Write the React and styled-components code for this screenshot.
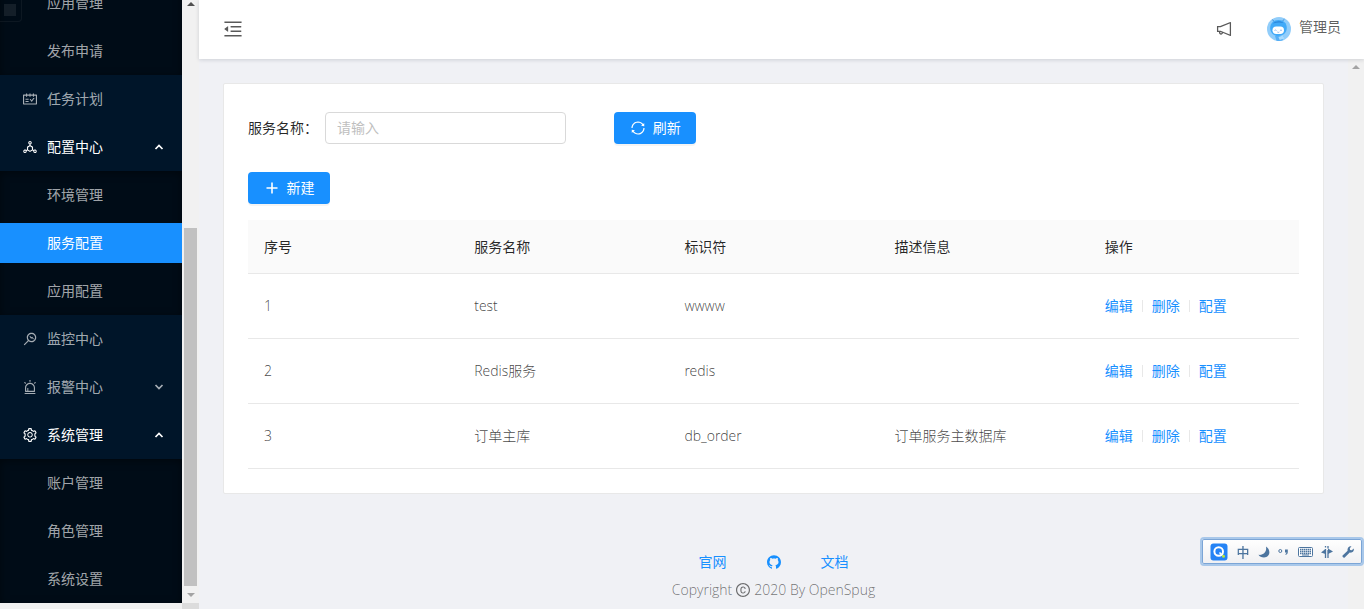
import styled, { createGlobalStyle } from "styled-components";
import {
    AiOutlineAlert,
    AiOutlineCopyright,
    AiOutlineDeploymentUnit,
    AiOutlineGithub,
    AiOutlineMenuFold,
    AiOutlineMonitor,
    AiOutlineNotification,
    AiOutlineSchedule,
    AiOutlineSetting,
    AiOutlineSync,
} from "react-icons/ai";

const menus = [
    { children: ["应用管理", "发布申请"] },
    { title: "任务计划", icon: AiOutlineSchedule },
    { title: "配置中心", icon: AiOutlineDeploymentUnit, open: true, children: ["环境管理", "服务配置", "应用配置"] },
    { title: "监控中心", icon: AiOutlineMonitor },
    { title: "报警中心", icon: AiOutlineAlert, open: false },
    { title: "系统管理", icon: AiOutlineSetting, open: true, children: ["账户管理", "角色管理", "系统设置"] },
];

const services = [
    { id: 1, name: "test", key: "wwww", desc: "" },
    { id: 2, name: "Redis服务", key: "redis", desc: "" },
    { id: 3, name: "订单主库", key: "db_order", desc: "订单服务主数据库" },
];

function Chevron({ open }) {
    return (
        <svg className="arrow" width="10" height="8" viewBox="0 0 10 8" aria-hidden="true">
            <path d={open ? "M1.500 6 5 2.500 8.500 6" : "M1.500 2 5 5.500 8.500 2"} fill="none" stroke="currentColor" strokeWidth="1.700" />
        </svg>
    )
}

function SideMenu() {
    return (
        <Sider>
            <MenuScroll>
                {menus.map((menu, index) => (
                    <div key={index}>
                        {menu.title && (
                            <MenuTitle href="#" $open={menu.open}>
                                <menu.icon />
                                <span>{menu.title}</span>
                                {menu.open !== undefined && <Chevron open={menu.open} />}
                            </MenuTitle>
                        )}
                        {menu.children && (
                            <SubMenu>
                                {menu.children.map((name) => (
                                    <SubItem href="#" key={name} $active={name === "服务配置"}>{name}</SubItem>
                                ))}
                            </SubMenu>
                        )}
                    </div>
                ))}
                <LogoCorner />
            </MenuScroll>
            <ScrollTrack>
                <Arrow $color="#505050" />
                <Thumb />
                <Arrow $down $color="#a3a3a3" />
            </ScrollTrack>
            <BottomTrack />
            <ScrollCorner />
        </Sider>
    )
}

function Avatar() {
    return (
        <svg width="24" height="24" viewBox="0 0 24 24" aria-hidden="true">
            <circle cx="12" cy="12" r="12" fill="#91cdfa" />
            <path d="M7 4.500 5.600 2.800M15.500 4 17.200 2.400" stroke="#3b8fdc" strokeWidth="1" strokeLinecap="round" />
            <path d="M11.500 3c5 0 8.300 3.200 8.300 7.800 0 4.400-3.300 8.200-8.300 8.200s-8.300-3.600-8.300-8.100C3.200 6.300 6.500 3 11.500 3z" fill="#41aaf8" />
            <path d="M6 6.500C8 4 14 3.500 16.500 6c-3-.8-7-.8-10.500.5z" fill="#2c86da" />
            <rect x="5.500" y="9.500" width="11.500" height="7.500" rx="3.700" fill="#fff" />
            <path d="M7.500 13.500q1-1 2 0M13 13.500q1-1 2 0M10.300 15q1 .8 2 0" fill="none" stroke="#7cabeb" strokeWidth=".8" />
            <path d="M8 19h8.500l-1 4.500a12 12 0 0 1-6 .2z" fill="#55aef5" />
            <path d="m11.500 20 4.500-1.500 1.200 3-4.500 1.500z" fill="#a9dcff" />
        </svg>
    )
}

function ImeBar() {
    return (
        <Ime>
            <svg width="18" height="18" viewBox="0 0 18 18" aria-hidden="true">
                <rect x=".5" y=".5" width="17" height="17" rx="3" fill="#2583f5" />
                <circle cx="8.700" cy="8.500" r="4.300" fill="none" stroke="#fff" strokeWidth="2" />
                <path d="m9.500 9.500 3 3" stroke="#fff" strokeWidth="1.600" />
                <circle cx="13.500" cy="13.300" r="1.500" fill="#b7e63c" />
            </svg>
            <span>中</span>
            <svg width="12" height="12" viewBox="0 0 12 12" aria-hidden="true">
                <path d="M8 .5c5 3 4.500 11-2 11-2.500 0-4.500-1-5.500-2.700C5.500 9.500 9 6 8 .5z" fill="#4d759f" />
            </svg>
            <svg width="11" height="10" viewBox="0 0 11 10" aria-hidden="true">
                <circle cx="2.300" cy="4" r="1.500" fill="none" stroke="#4d759f" />
                <path d="M7 2.500h2.800v2.600c0 1.500-.8 2.500-2.300 3V7c.7-.4 1-.8 1-1.500H7z" fill="#4d759f" />
            </svg>
            <svg width="15" height="10" viewBox="0 0 15 10" aria-hidden="true">
                <rect x=".5" y=".5" width="14" height="9" rx="1" fill="#fff" stroke="#4d759f" />
                <path d="M2 2.500h11M2 4.500h11M2 6.500h11" stroke="#4d759f" strokeWidth="1.400" strokeDasharray="1.500 .5" />
                <path d="M4 8h7" stroke="#4d759f" />
            </svg>
            <svg width="12" height="12" viewBox="0 0 12 12" aria-hidden="true">
                <path d="M7 0v2.500M7 4v8M4.500 0v1.500M4.500 3v9" stroke="#4d759f" strokeWidth="1.300" />
                <path d="M0 6.500 4.500 3v5zM12 5.500 7 2.500V8z" fill="#4d759f" />
            </svg>
            <svg width="12" height="12" viewBox="0 0 12 12" aria-hidden="true">
                <path d="M9.500.3 7.800 2.200l.3 1.700 1.700.3L11.700 2.500c.7 2.500-1.200 4.700-4 4L2.700 11.500C1.500 12.300-.2 10.700.6 9.400l5-4.700C5 2 7-.2 9.500.3z" fill="#4d759f" />
            </svg>
        </Ime>
    )
}

function ServiceTable() {
    return (
        <Table>
            <thead>
                <tr>
                    <th>序号</th>
                    <th>服务名称</th>
                    <th>标识符</th>
                    <th>描述信息</th>
                    <th>操作</th>
                </tr>
            </thead>
            <tbody>
                {services.map((item) => (
                    <tr key={item.id}>
                        <td>{item.id}</td>
                        <td>{item.name}</td>
                        <td>{item.key}</td>
                        <td>{item.desc}</td>
                        <td>
                            <Actions>
                                <a href="#">编辑</a>
                                <i />
                                <a href="#">删除</a>
                                <i />
                                <a href="#">配置</a>
                            </Actions>
                        </td>
                    </tr>
                ))}
            </tbody>
        </Table>
    )
}

function App() {
    return (
        <Layout>
            <GlobalStyle />
            <SideMenu />
            <Main>
                <Header>
                    <IconButton aria-label="menu" $size={22}><AiOutlineMenuFold /></IconButton>
                    <div className="right">
                        <IconButton aria-label="notice" $size={18}><AiOutlineNotification /></IconButton>
                        <User href="#"><Avatar /><span>管理员</span></User>
                    </div>
                </Header>
                <Body>
                    <Content>
                        <Card>
                            <SearchForm>
                                <Field>
                                    <label htmlFor="service-name">服务名称：</label>
                                    <input id="service-name" type="text" placeholder="请输入" />
                                </Field>
                                <div>
                                    <PrimaryButton type="button"><AiOutlineSync />刷新</PrimaryButton>
                                </div>
                            </SearchForm>
                            <PrimaryButton type="button">
                                <svg width="16" height="16" viewBox="0 0 16 16" aria-hidden="true">
                                    <path d="M8 2.500v11M2.500 8h11" stroke="currentColor" strokeWidth="1.600" />
                                </svg>
                                新建
                            </PrimaryButton>
                            <ServiceTable />
                        </Card>
                        <Footer>
                            <div className="links">
                                <a href="#">官网</a>
                                <a href="#" aria-label="github"><AiOutlineGithub /></a>
                                <a href="#">文档</a>
                            </div>
                            <p>Copyright <AiOutlineCopyright /> 2020 By OpenSpug</p>
                        </Footer>
                    </Content>
                    <PageTrack><Arrow $color="#a3a3a3" /></PageTrack>
                </Body>
            </Main>
            <ImeBar />
        </Layout>
    )
}

export default App;


const GlobalStyle = createGlobalStyle`
* {
    box-sizing: border-box;
}
body {
    margin: 0;
    font-family: "Open Sans", "Noto Sans CJK SC", sans-serif;
    font-size: 14px;
    line-height: 22px;
    color: rgba(0, 0, 0, 0.65);
    background: #f0f2f5;
}
a {
    color: #1890ff;
    text-decoration: none;
}
svg {
    flex-shrink: 0;
}
`

const Layout = styled.div`
display: flex;
height: 100vh;
overflow: hidden;
background: #f0f1f5;
`

const Sider = styled.aside`
display: grid;
grid-template-columns: 182px 17px;
grid-template-rows: 1fr 6px;
flex-shrink: 0;
height: 100vh;
`

/* the menu is scrolled to its end */
const MenuScroll = styled.nav`
position: relative;
display: flex;
flex-direction: column;
justify-content: flex-end;
min-height: 0;
overflow: hidden;
background: #001529;
`

const LogoCorner = styled.div`
position: absolute;
top: 0;
left: 0;
width: 22px;
height: 22px;
border: solid rgba(255, 255, 255, 0.05);
border-width: 0 1px 1px 0;
border-radius: 0 0 4px 0;

&::after {
    content: "";
    display: block;
    width: 12px;
    height: 12px;
    margin: 4px;
    background: rgba(255, 255, 255, 0.08);
}
`

const MenuTitle = styled.a`
display: flex;
align-items: center;
gap: 9px;
height: 48px;
padding: 0 18px 0 22px;
color: ${(p) => (p.$open ? "#fff" : "rgba(255, 255, 255, 0.65)")};
font-size: 14px;

svg:first-child {
    font-size: 16px;
}
.arrow {
    margin-left: auto;
}
`

const SubMenu = styled.div`
background: #000c17;
box-shadow: inset 0 2px 8px rgba(0, 0, 0, 0.45);
padding: 4px 0;
display: flex;
flex-direction: column;
gap: 8px;
`

const SubItem = styled.a`
height: 40px;
padding-left: 47px;
line-height: 40px;
color: ${(p) => (p.$active ? "#fff" : "rgba(255, 255, 255, 0.65)")};
background: ${(p) => (p.$active ? "#1890ff" : "transparent")};
`

const ScrollTrack = styled.div`
display: flex;
flex-direction: column;
align-items: center;
background: #f1f1f1;
`

const Thumb = styled.div`
width: 13px;
height: 358px;
margin-top: auto;
background: #c1c1c1;
`

const Arrow = styled.div`
display: flex;
align-items: center;
justify-content: center;
width: 100%;
height: ${(p) => (p.$down ? "17px" : "8px")};

&::before {
    content: "";
    border: solid transparent;
    border-width: 0 4px;
    ${(p) => (p.$down ? "border-top" : "border-bottom")}: 4px solid ${(p) => p.$color};
}
`

const BottomTrack = styled.div`
background: #f1f1f1;
`

const ScrollCorner = styled.div`
background: #dcdcdc;
`

const Main = styled.div`
display: flex;
flex-direction: column;
flex: 1;
min-width: 0;
`

const Header = styled.header`
position: relative;
display: flex;
align-items: center;
justify-content: space-between;
flex-shrink: 0;
height: 59px;
padding: 0 23px 2px;
background: #fff;
box-shadow: 0 1px 4px rgba(0, 21, 41, 0.15);

.right {
    display: flex;
    align-items: center;
    gap: 34px;
}
`

const IconButton = styled.button`
display: flex;
padding: 0;
border: 0;
background: none;
color: rgba(0, 0, 0, 0.65);
font-size: ${(p) => p.$size}px;
`

const User = styled.a`
display: flex;
align-items: center;
gap: 8px;
color: rgba(0, 0, 0, 0.65);

span {
    padding-bottom: 4px;
}
`

const Body = styled.div`
display: flex;
flex: 1;
min-height: 0;
`

const PageTrack = styled.div`
flex-shrink: 0;
width: 16px;
padding-top: 4px;
background: #f1f1f1;
`

const Content = styled.main`
flex: 1;
min-width: 0;
padding: 24px 24px 0;
`

const Card = styled.section`
padding: 28px 24px 24px;
background: #fff;
border: 1px solid #e8e8e8;
border-radius: 2px;
`

const SearchForm = styled.form`
display: grid;
grid-template-columns: repeat(3, 1fr);
gap: 48px;
margin-bottom: 28px;
`

const Field = styled.div`
display: flex;
align-items: center;
color: rgba(0, 0, 0, 0.85);

label {
    flex-shrink: 0;
    width: 77px;
}
input {
    flex: 1;
    min-width: 0;
    height: 32px;
    padding: 0 11px 2px;
    border: 1px solid #d9d9d9;
    border-radius: 4px;
    font: inherit;
}
input::placeholder {
    color: #bfbfbf;
}
`

const PrimaryButton = styled.button`
display: flex;
align-items: center;
justify-content: center;
gap: 7px;
width: 82px;
height: 32px;
padding: 0;
border: 0;
border-radius: 4px;
background: #1890ff;
box-shadow: 0 2px 0 rgba(0, 0, 0, 0.045);
color: #fff;
font: inherit;

svg {
    width: 16px;
    height: 16px;
}
`

const Table = styled.table`
width: 100%;
margin-top: 16px;
border-collapse: separate;
border-spacing: 0;
table-layout: fixed;
text-align: left;

th {
    height: 54px;
    padding: 0 16px;
    font-weight: 400;
    color: rgba(0, 0, 0, 0.85);
    background: #fafafa;
    border-bottom: 1px solid #e8e8e8;
}
td {
    height: 65px;
    padding: 0 16px;
    font-family: "Open Sans Light", "Open Sans", "Noto Sans CJK SC", sans-serif;
    font-weight: 300;
    color: rgba(0, 0, 0, 0.75);
    border-bottom: 1px solid #e8e8e8;
}
`

const Actions = styled.div`
display: flex;
align-items: center;
gap: 9px;
font-weight: 400;

i {
    width: 1px;
    height: 12px;
    background: #e8e8e8;
}
`

const Footer = styled.footer`
margin-top: 57px;
text-align: center;
color: rgba(0, 0, 0, 0.55);

.links {
    display: flex;
    justify-content: center;
    gap: 39px;
    margin-bottom: 6px;
}
a {
    display: flex;
    align-items: center;
}
svg {
    font-size: 16px;
}
p {
    display: flex;
    align-items: center;
    justify-content: center;
    gap: 3px;
    margin: 0;
    font-weight: 300;
}
`

const Ime = styled.div`
position: fixed;
right: 0;
bottom: 43px;
display: flex;
align-items: center;
justify-content: space-between;
width: 164px;
height: 29px;
padding: 0 8px;
border: 2px solid #a9c8ea;
border-radius: 4px;
background: linear-gradient(#fff, #f0f0f2);
box-shadow: inset 0 0 0 1px #7ba5d6;
color: #4d759f;

span {
    font-size: 13px;
    font-weight: 500;
}
`
